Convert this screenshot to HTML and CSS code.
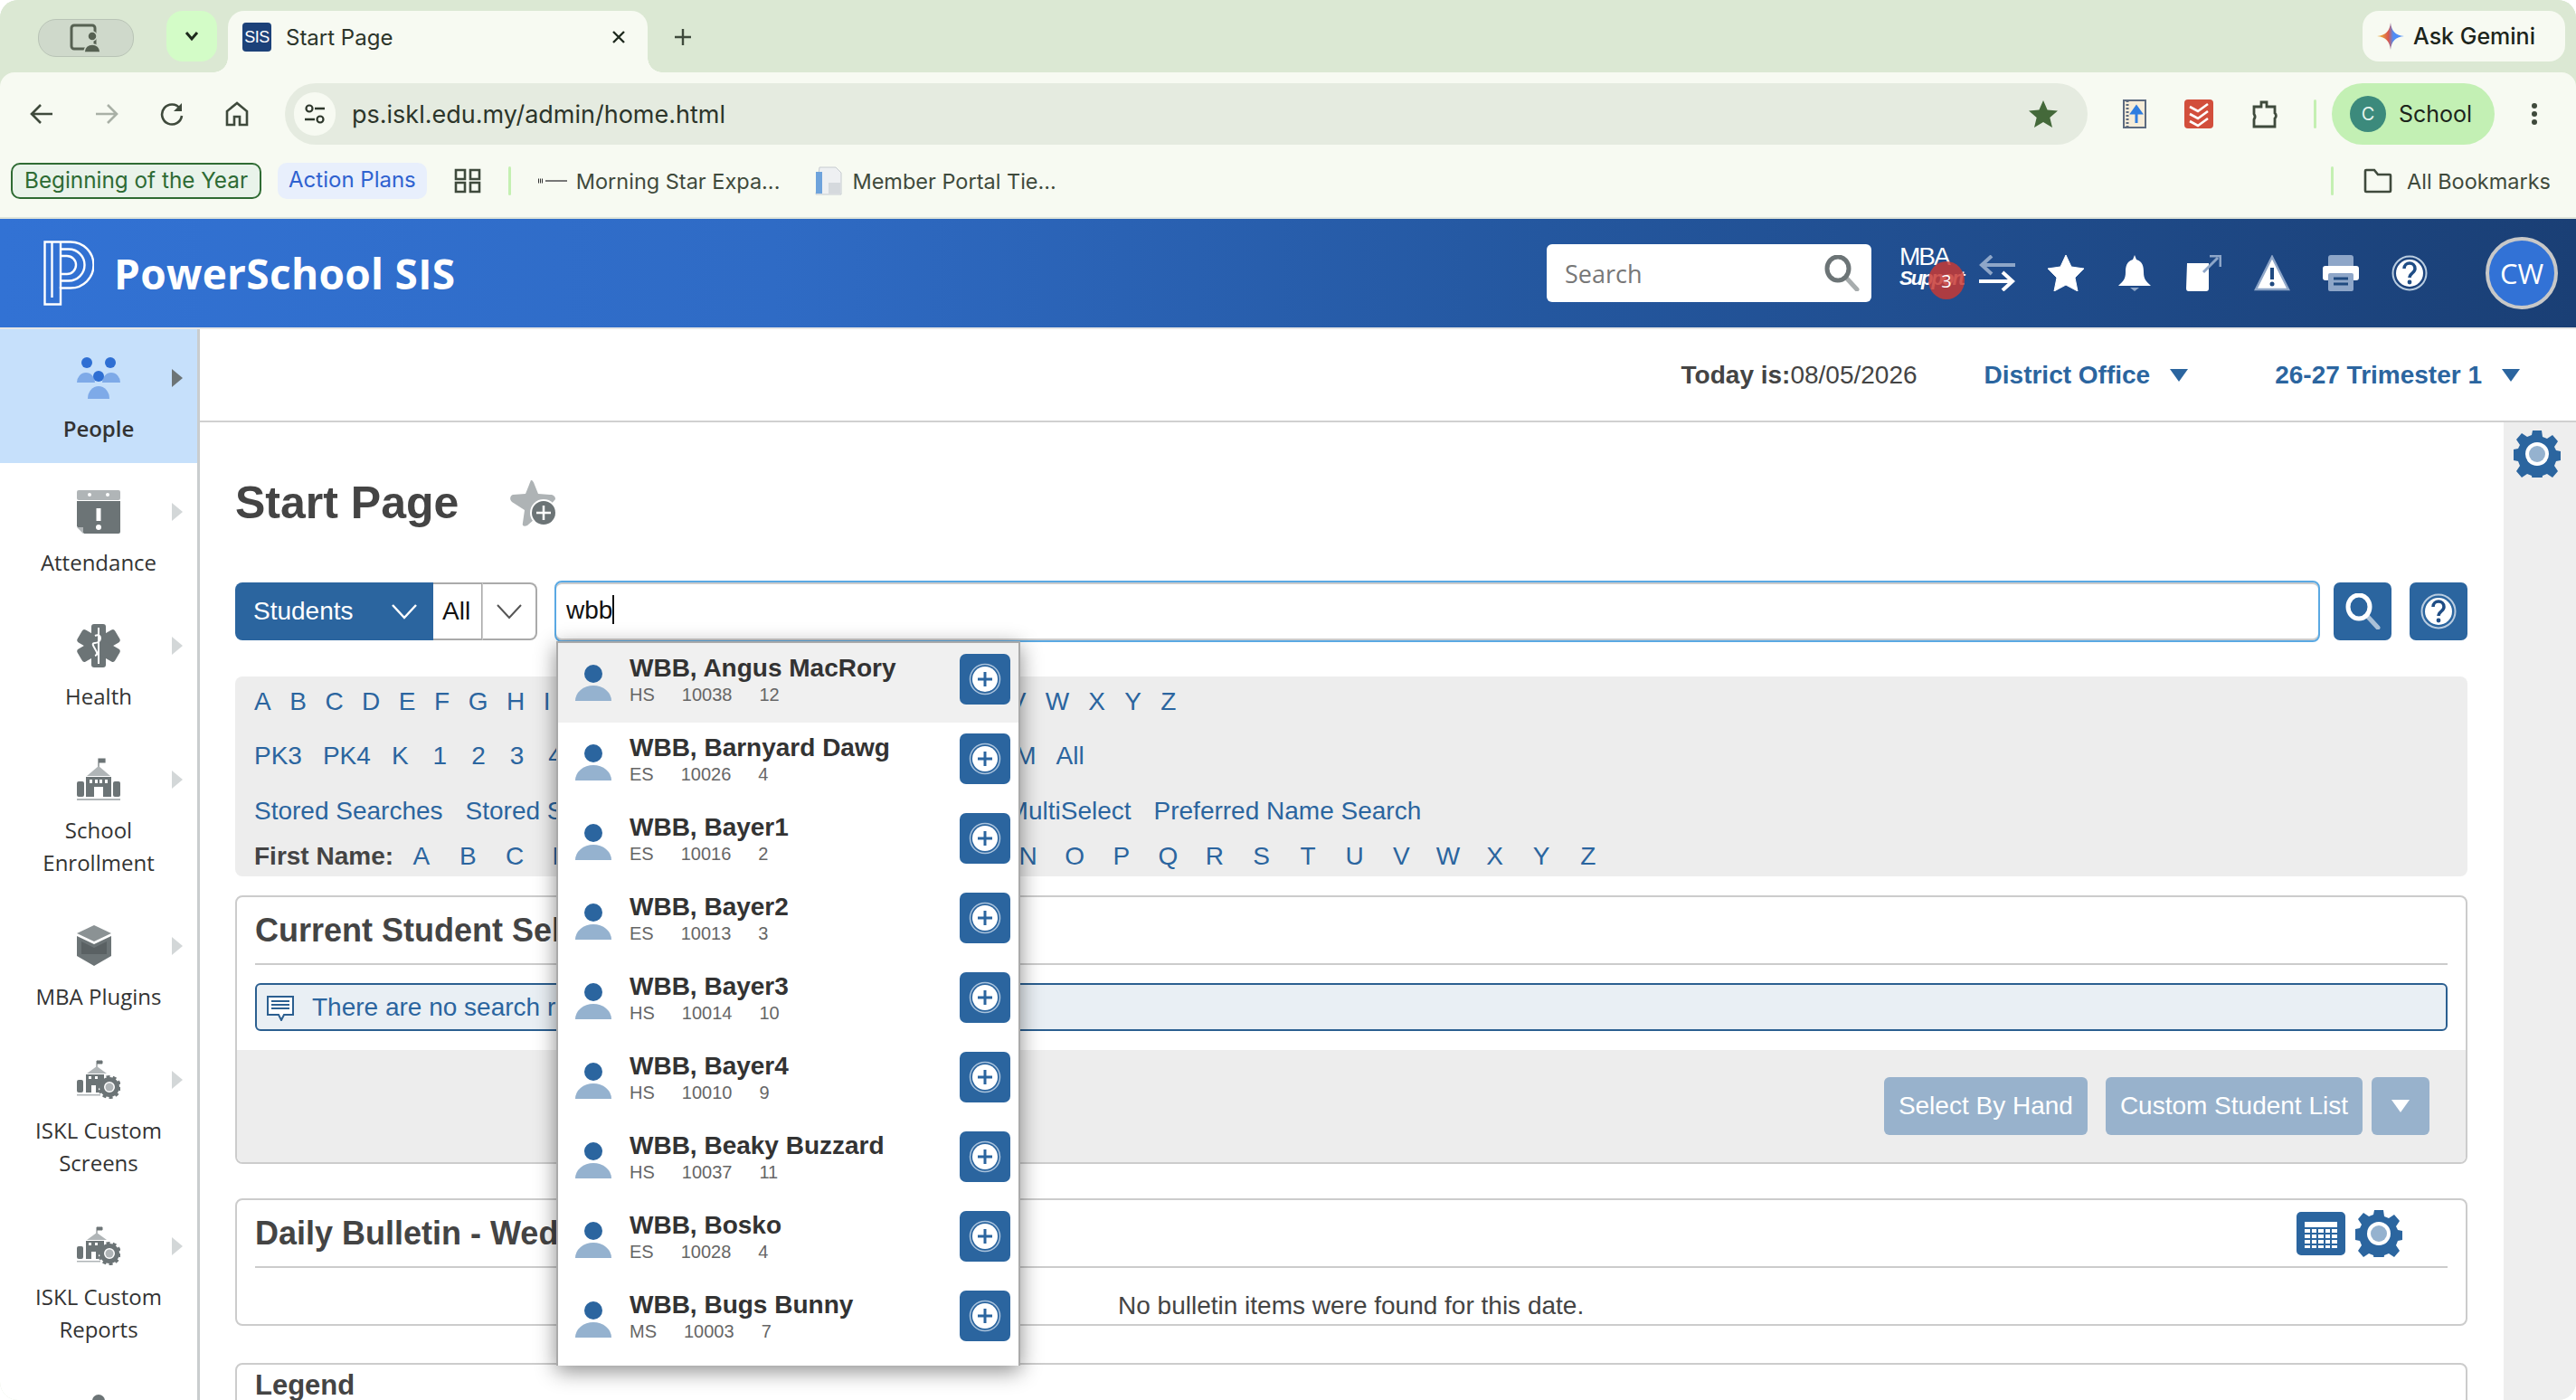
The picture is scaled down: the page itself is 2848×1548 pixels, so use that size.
FILE: index.html
```html
<!DOCTYPE html>
<html lang="en">
<head>
    <meta charset="UTF-8">
    <title>Start Page</title>
    <link rel="stylesheet" href="styles.css">
</head>
<body>
<svg class="defs" width="0" height="0">
    <defs>
        <symbol id="i-person" viewBox="0 0 40 40">
            <circle cx="20" cy="10" r="10" fill="#2b659f"/>
            <path d="M0 40a20 17 0 0 1 40 0z" fill="#95b2cf"/>
        </symbol>
        <symbol id="i-plus" viewBox="0 0 36 36">
            <circle cx="18" cy="18" r="16.5" fill="none" stroke="#aac3dc" stroke-width="1.5"/>
            <circle cx="18" cy="18" r="14" fill="#fff"/>
            <path d="M18 10v16M10 18h16" stroke="#2b659f" stroke-width="3"/>
        </symbol>
        <symbol id="i-help" viewBox="0 0 40 40">
            <circle cx="20" cy="20" r="18.5" fill="none" stroke="#b9cce0" stroke-width="2"/>
            <circle cx="20" cy="20" r="15" fill="#fff"/>
            <path d="M14 15c0-8 12-8 12 0 0 5-6 5-6 10" fill="none" stroke="#1f4d85" stroke-width="3.5"/>
            <circle cx="20" cy="30" r="2.4" fill="#1f4d85"/>
        </symbol>
        <symbol id="i-mag" viewBox="0 0 40 40">
            <path d="M25 25l12 13" stroke="currentColor" stroke-opacity=".6" stroke-width="5" stroke-linecap="round"/>
            <ellipse cx="16" cy="15" rx="12" ry="13" fill="none" stroke="currentColor" stroke-width="5"/>
        </symbol>
        <symbol id="i-gear" viewBox="0 0 52 52">
            <path d="M21 0h10l1 7 5 2 6-4 6 7-4 6 2 4 5 1v10l-5 1-2 5 4 6-6 7-6-4-5 2-1 7H21l-1-7-5-2-6 4-6-7 4-6-2-5-5-1V21l5-1 2-4-4-6 6-7 6 4 5-2z" fill="#2b659f"/>
            <circle cx="26" cy="26" r="13" fill="#fff"/>
            <circle cx="26" cy="26" r="9" fill="#95b2cf"/>
        </symbol>
        <symbol id="i-school" viewBox="0 0 48 48">
            <path d="M24 11V1h7v4h-7" fill="#6c7476" stroke="#6c7476" stroke-width="1.2"/>
            <path d="M24 9l13 11H11z" fill="#b0b5b7"/>
            <path d="M10 21h28v22h-9V32h-10v11h-9z" fill="#6c7476"/>
            <path d="M14 24h3v4h-3zM20 24h3v4h-3zM25 24h3v4h-3zM31 24h3v4h-3z" fill="#fff"/>
            <path d="M23 32h2v11h-2z" fill="#fff"/>
            <rect x="0" y="26" width="8" height="17" rx="2" fill="#6c7476"/>
            <rect x="40" y="26" width="8" height="17" rx="2" fill="#6c7476"/>
            <rect x="0" y="45" width="48" height="2" fill="#b0b5b7"/>
        </symbol>
        <symbol id="i-school-gear" viewBox="0 0 48 44">
            <path d="M22 8V1h6v3h-6" fill="#6c7476" stroke="#6c7476" stroke-width="1"/>
            <path d="M22 7l11 8H11z" fill="#b0b5b7"/>
            <path d="M10 16h20v8l-6 8v4h-3v-8h-5v8h-6z" fill="#6c7476"/>
            <path d="M13 18h3v3h-3zM20 18h3v3h-3z" fill="#fff"/>
            <rect x="0" y="22" width="7" height="14" rx="2" fill="#6c7476"/>
            <rect x="0" y="38" width="26" height="1.5" fill="#b0b5b7"/>
            <circle cx="36" cy="30" r="8.5" fill="none" stroke="#6c7476" stroke-width="5"/>
            <circle cx="36" cy="30" r="11.5" fill="none" stroke="#6c7476" stroke-width="3" stroke-dasharray="4 3.2"/>
            <circle cx="36" cy="30" r="4.5" fill="#b0b5b7"/>
        </symbol>
    </defs>
</svg>

<div class="window">
    <div class="tabstrip">
        <div class="profile-pill">
            <svg width="40" height="32" viewBox="0 0 40 32"><rect x="4" y="2" width="26" height="26" rx="3" fill="none" stroke="#566152" stroke-width="3"/><circle cx="27" cy="14" r="5" fill="#566152" stroke="#cfd9cb" stroke-width="1.5"/><path d="M18 32c0-12 18-12 18 0z" fill="#566152" stroke="#cfd9cb" stroke-width="1.5"/></svg>
        </div>
        <div class="tab-group">
            <svg width="16" height="12" viewBox="0 0 16 12"><path d="M2 2l6 7 6-7" fill="none" stroke="#1d2a1c" stroke-width="3"/></svg>
        </div>
        <div class="tab">
            <span class="favicon">SIS</span>
            <span class="tab-title">Start Page</span>
            <svg class="tab-close" width="16" height="16" viewBox="0 0 16 16"><path d="M2 2l12 12M14 2L2 14" stroke="#1f2a1e" stroke-width="2.4"/></svg>
        </div>
        <svg class="new-tab" width="20" height="20" viewBox="0 0 20 20"><path d="M10 1v18M1 10h18" stroke="#3f4a3c" stroke-width="2.4"/></svg>
        <div class="gemini">
            <svg width="30" height="30" viewBox="0 0 30 30">
                <defs><linearGradient id="gem" x1="0" x2="1" y1="0" y2="0"><stop offset=".15" stop-color="#e9a33a"/><stop offset=".42" stop-color="#d9574c"/><stop offset=".6" stop-color="#4f8df5"/></linearGradient></defs>
                <path d="M15 0c1 9 5 14 15 15-10 1-14 6-15 15-1-9-5-14-15-15 10-1 14-6 15-15z" fill="url(#gem)"/>
            </svg>
            <span>Ask Gemini</span>
        </div>
    </div>

    <div class="toolbar">
        <div class="nav-icons">
            <svg width="28" height="28" viewBox="0 0 28 28"><path d="M26 14H4M13 4L3 14l10 10" fill="none" stroke="#3f4a3c" stroke-width="2.6"/></svg>
            <svg width="28" height="28" viewBox="0 0 28 28"><path d="M2 14h22M15 4l10 10-10 10" fill="none" stroke="#a9b0a6" stroke-width="2.6"/></svg>
            <svg width="28" height="28" viewBox="0 0 28 28"><path d="M23 8a11 11 0 1 0 2 8" fill="none" stroke="#3f4a3c" stroke-width="2.6"/><path d="M25 2v9h-9z" fill="#3f4a3c"/></svg>
            <svg width="28" height="28" viewBox="0 0 28 28"><path d="M14 2L3 11v15h8v-9h6v9h8V11z" fill="none" stroke="#3f4a3c" stroke-width="2.6"/></svg>
        </div>
        <div class="omnibox">
            <span class="site-info">
                <svg width="26" height="26" viewBox="0 0 26 26"><circle cx="7" cy="7" r="3.5" fill="none" stroke="#2e382c" stroke-width="2.2"/><path d="M13 7h11M2 19h11" stroke="#2e382c" stroke-width="2.4"/><circle cx="19" cy="19" r="3.5" fill="none" stroke="#2e382c" stroke-width="2.2"/></svg>
            </span>
            <span class="url">ps.iskl.edu.my/admin/home.html</span>
            <svg class="url-star" width="32" height="30" viewBox="0 0 32 30"><path d="M16 0l4.6 10.5 11.4 1-8.700 7.500 2.700 11L16 24l-10 6 2.700-11L0 11.500l11.400-1z" fill="#44693a"/></svg>
        </div>
        <div class="ext-icons">
            <svg width="26" height="32" viewBox="0 0 26 32"><rect x="1" y="1" width="24" height="30" fill="#f6ecd8" stroke="#5d6b80" stroke-width="2"/><path d="M5 1v30" stroke="#5d6b80" stroke-width="3" stroke-dasharray="2 2"/><path d="M15 26V12M10 15l5-7 5 7z" stroke="#2f7de0" stroke-width="3" fill="#2f7de0"/></svg>
            <svg width="32" height="32" viewBox="0 0 32 32"><rect width="32" height="32" rx="4" fill="#d24e3c"/><path d="M6 8l9 5 11-8M6 16l9 5 11-8M6 24l9 5 11-8" fill="none" stroke="#fff" stroke-width="2.6"/></svg>
            <svg width="32" height="32" viewBox="0 0 32 32"><path d="M3 8h8V3h6v5h9v7a4 4 0 0 1 0 6v9H3v-8a5 5 0 0 0 0-6z" fill="none" stroke="#3f4a3c" stroke-width="2.8"/></svg>
        </div>
        <span class="chrome-sep"></span>
        <div class="school-pill">
            <span class="school-avatar">C</span>
            <span>School</span>
        </div>
        <svg class="kebab" width="8" height="26" viewBox="0 0 8 26"><circle cx="4" cy="4" r="3" fill="#3f4a3c"/><circle cx="4" cy="13" r="3" fill="#3f4a3c"/><circle cx="4" cy="22" r="3" fill="#3f4a3c"/></svg>
    </div>

    <div class="bookmarks">
        <span class="bm-green">Beginning of the Year</span>
        <span class="bm-blue">Action Plans</span>
        <svg class="bm-grid" width="30" height="28" viewBox="0 0 30 28"><path d="M2 2h10v10H2zM18 2h10v10H18zM2 16h10v10H2zM18 16h10v10H18z" fill="none" stroke="#3f4a3c" stroke-width="2.6"/></svg>
        <span class="chrome-sep"></span>
        <span class="bm-item">
            <svg width="32" height="8" viewBox="0 0 32 8"><path d="M0 4h6" stroke="#333" stroke-width="5" stroke-dasharray="1 1"/><path d="M8 4h24" stroke="#777" stroke-width="2"/></svg>
            Morning Star Expa...
        </span>
        <span class="bm-item bm-next">
            <svg width="32" height="32" viewBox="0 0 32 32"><path d="M6 1h18l6 6v24H2z" fill="#eef0f2" stroke="#c6cbd0"/><rect x="2" y="6" width="7" height="24" fill="#6ea3dc"/><rect x="16" y="18" width="13" height="12" fill="#d5d9dd"/></svg>
            Member Portal Tie...
        </span>
        <span class="chrome-sep bm-right"></span>
        <span class="bm-item">
            <svg width="32" height="28" viewBox="0 0 32 28"><path d="M2 25V3a1 1 0 0 1 1-1h9l4 5h13a1 1 0 0 1 1 1v17a1 1 0 0 1-1 1H3a1 1 0 0 1-1-1z" fill="none" stroke="#3f4a3c" stroke-width="2.6"/></svg>
            All Bookmarks
        </span>
    </div>

    <header class="ps-header">
        <svg class="ps-logo" width="56" height="72" viewBox="0 0 56 72">
            <g fill="none" stroke="#fff" stroke-width="2.4">
                <path d="M1.500 1.500H30a25 25 0 0 1 0 51H19v18H1.500z"/>
                <path d="M9.500 1.500V63"/>
                <path d="M19 1.500V53"/>
                <path d="M19 9.500h9a17.500 17.500 0 0 1 0 35h-9"/>
                <path d="M19 17h7a10 10 0 0 1 0 20h-7"/>
            </g>
        </svg>
        <span class="ps-name">PowerSchool SIS</span>
        <div class="header-search">
            <span>Search</span>
            <svg class="header-mag" width="40" height="40"><use href="#i-mag"/></svg>
        </div>
        <div class="mba-link">
            <span class="mba-top">MBA</span>
            <span class="mba-bottom">Support</span>
            <span class="mba-badge">3</span>
        </div>
        <div class="header-icons">
            <svg width="40" height="40" viewBox="0 0 40 40"><path d="M40 11H4M14 1L3 11l11 10" fill="none" stroke="#8ea6c8" stroke-width="4"/><path d="M0 29h36M26 19l11 10-11 10" fill="none" stroke="#fff" stroke-width="4"/></svg>
            <svg width="40" height="40" viewBox="0 0 40 40"><path d="M20 0l6 13 14 2-10 10 3 15-13-7-13 7 3-15L0 15l14-2z" fill="#fff" stroke="#fff" stroke-linejoin="round" stroke-width="1"/></svg>
            <svg width="40" height="40" viewBox="0 0 40 40"><path d="M20 0l2 5c7 2 8 8 8 14 0 8 3 10 8 15H2c5-5 8-7 8-15 0-6 1-12 8-14z" fill="#fff"/><path d="M15 36h10l-5 4z" fill="#8ea6c8"/></svg>
            <svg width="40" height="40" viewBox="0 0 40 40"><path d="M2 9h24v28a3 3 0 0 1-3 3H3a3 3 0 0 1-2-3z" fill="#fff"/><path d="M20 19L36 3" stroke="#8ea6c8" stroke-width="3"/><path d="M27 1h12v12" fill="none" stroke="#8ea6c8" stroke-width="3"/></svg>
            <svg width="40" height="40" viewBox="0 0 40 40"><path d="M20 2L38 38H2z" fill="#fff" stroke="#8ea6c8" stroke-width="2.500"/><path d="M20 14v13" stroke="#1f4a80" stroke-width="4"/><circle cx="20" cy="32" r="2.500" fill="#1f4a80"/></svg>
            <svg width="40" height="40" viewBox="0 0 40 40"><rect x="6" y="0" width="28" height="14" rx="3" fill="#8ea6c8"/><rect x="0" y="12" width="40" height="16" rx="3" fill="#fff"/><rect x="6" y="20" width="28" height="20" rx="2" fill="#8ea6c8"/><path d="M12 26h16M12 32h16" stroke="#1f4a80" stroke-width="3"/></svg>
            <svg width="40" height="40"><use href="#i-help"/></svg>
        </div>
        <span class="avatar">CW</span>
    </header>

    <div class="ps-body">
        <nav class="sidebar">
            <a class="nav-item active">
                <svg class="nav-icon" width="48" height="46" viewBox="0 0 48 46">
                    <path d="M0 28a10 11 0 0 1 20 0zM28 28a10 11 0 0 1 20 0z" fill="#7eaae8"/>
                    <path d="M12 46a12 14 0 0 1 24 0z" fill="#7eaae8"/>
                    <circle cx="11" cy="6" r="6" fill="#2f6fd3"/><circle cx="37" cy="6" r="6" fill="#2f6fd3"/><circle cx="24" cy="21" r="6" fill="#2f6fd3"/>
                </svg>
                <span class="nav-arrow"></span>
                <span class="nav-label">People</span>
            </a>
            <a class="nav-item">
                <svg class="nav-icon" width="48" height="48" viewBox="0 0 48 48">
                    <rect width="48" height="11" rx="2" fill="#b0b5b7"/>
                    <circle cx="14" cy="5" r="2" fill="#fff"/><circle cx="34" cy="5" r="2" fill="#fff"/>
                    <path d="M0 12h48v34a2 2 0 0 1-2 2H8l-8-8z" fill="#6c7476"/>
                    <path d="M0 41h7v7z" fill="#b0b5b7"/>
                    <path d="M24 20v14" stroke="#fff" stroke-width="5"/><circle cx="24" cy="41" r="3" fill="#fff"/>
                </svg>
                <span class="nav-arrow"></span>
                <span class="nav-label">Attendance</span>
            </a>
            <a class="nav-item">
                <svg class="nav-icon" width="48" height="48" viewBox="0 0 48 48">
                    <g fill="#6c7476"><rect x="16" y="0" width="16" height="48" rx="3"/><rect x="16" y="0" width="16" height="48" rx="3" transform="rotate(60 24 24)"/><rect x="16" y="0" width="16" height="48" rx="3" transform="rotate(120 24 24)"/></g>
                    <path d="M24 4v40M20 13c8-4 8 8 0 8s8 12 0 14" fill="none" stroke="#fff" stroke-width="2"/>
                </svg>
                <span class="nav-arrow"></span>
                <span class="nav-label">Health</span>
            </a>
            <a class="nav-item">
                <svg class="nav-icon" width="48" height="48"><use href="#i-school"/></svg>
                <span class="nav-arrow"></span>
                <span class="nav-label">School<br>Enrollment</span>
            </a>
            <a class="nav-item">
                <svg class="nav-icon cube" width="38" height="46" viewBox="0 0 38 46">
                    <path d="M19 0l19 9-19 9L0 9z" fill="#8b9294"/>
                    <path d="M0 12l19 9 19-9v22l-19 11L0 34z" fill="#6c7476"/>
                    <path d="M5 18l14 7 14-7v14H5z" fill="#5a6163"/>
                </svg>
                <span class="nav-arrow"></span>
                <span class="nav-label">MBA Plugins</span>
            </a>
            <a class="nav-item">
                <svg class="nav-icon" width="48" height="44"><use href="#i-school-gear"/></svg>
                <span class="nav-arrow"></span>
                <span class="nav-label">ISKL Custom<br>Screens</span>
            </a>
            <a class="nav-item">
                <svg class="nav-icon" width="48" height="44"><use href="#i-school-gear"/></svg>
                <span class="nav-arrow"></span>
                <span class="nav-label">ISKL Custom<br>Reports</span>
            </a>
            <a class="nav-item">
                <svg class="nav-icon" width="48" height="46" viewBox="0 0 48 46"><circle cx="24" cy="10" r="7" fill="#6c7476"/></svg>
            </a>
        </nav>

        <main class="main">
            <div class="subbar">
                <span class="today"><b>Today is:</b>08/05/2026</span>
                <span class="picker picker-school">District Office<i class="tri"></i></span>
                <span class="picker">26-27 Trimester 1<i class="tri"></i></span>
            </div>
            <div class="main-row">
                <div class="content">
                    <div class="title-row">
                        <h1>Start Page</h1>
                        <svg width="56" height="54" viewBox="0 0 56 54">
                            <path d="M26 2c2 0 3 2 4 5l4 10 13 1c4 0 6 2 6 5l-7 8-24 21c-4 2-6 0-5-3l2-14-14-9c-3-3-2-7 1-8l14-1 4-10c1-3 2-5 2-5z" fill="#aeb3b5"/>
                            <circle cx="40" cy="38" r="15" fill="#fff"/>
                            <circle cx="40" cy="38" r="13" fill="#6c7476"/>
                            <path d="M40 30v16M32 38h16" stroke="#fff" stroke-width="2.500"/>
                        </svg>
                    </div>

                    <div class="search-row">
                        <div class="type-select">
                            <span class="type-students">Students
                                <svg width="28" height="18" viewBox="0 0 28 18"><path d="M1 2l13 14L27 2" fill="none" stroke="#fff" stroke-width="2.500"/></svg>
                            </span>
                            <span class="type-all">All</span>
                            <span class="type-caret">
                                <svg width="28" height="18" viewBox="0 0 28 18"><path d="M1 2l13 14L27 2" fill="none" stroke="#555" stroke-width="2"/></svg>
                            </span>
                        </div>
                        <div class="search-wrap">
                            <div class="search-input">wbb<span class="caret"></span></div>
                            <ul class="results">
                                <li class="hover">
                                    <svg class="res-icon" width="40" height="40"><use href="#i-person"/></svg>
                                    <div class="res-text"><b>WBB, Angus MacRory</b><span><i>HS</i><i>10038</i><i>12</i></span></div>
                                    <span class="res-add"><svg width="36" height="36"><use href="#i-plus"/></svg></span>
                                </li>
                                <li>
                                    <svg class="res-icon" width="40" height="40"><use href="#i-person"/></svg>
                                    <div class="res-text"><b>WBB, Barnyard Dawg</b><span><i>ES</i><i>10026</i><i>4</i></span></div>
                                    <span class="res-add"><svg width="36" height="36"><use href="#i-plus"/></svg></span>
                                </li>
                                <li>
                                    <svg class="res-icon" width="40" height="40"><use href="#i-person"/></svg>
                                    <div class="res-text"><b>WBB, Bayer1</b><span><i>ES</i><i>10016</i><i>2</i></span></div>
                                    <span class="res-add"><svg width="36" height="36"><use href="#i-plus"/></svg></span>
                                </li>
                                <li>
                                    <svg class="res-icon" width="40" height="40"><use href="#i-person"/></svg>
                                    <div class="res-text"><b>WBB, Bayer2</b><span><i>ES</i><i>10013</i><i>3</i></span></div>
                                    <span class="res-add"><svg width="36" height="36"><use href="#i-plus"/></svg></span>
                                </li>
                                <li>
                                    <svg class="res-icon" width="40" height="40"><use href="#i-person"/></svg>
                                    <div class="res-text"><b>WBB, Bayer3</b><span><i>HS</i><i>10014</i><i>10</i></span></div>
                                    <span class="res-add"><svg width="36" height="36"><use href="#i-plus"/></svg></span>
                                </li>
                                <li>
                                    <svg class="res-icon" width="40" height="40"><use href="#i-person"/></svg>
                                    <div class="res-text"><b>WBB, Bayer4</b><span><i>HS</i><i>10010</i><i>9</i></span></div>
                                    <span class="res-add"><svg width="36" height="36"><use href="#i-plus"/></svg></span>
                                </li>
                                <li>
                                    <svg class="res-icon" width="40" height="40"><use href="#i-person"/></svg>
                                    <div class="res-text"><b>WBB, Beaky Buzzard</b><span><i>HS</i><i>10037</i><i>11</i></span></div>
                                    <span class="res-add"><svg width="36" height="36"><use href="#i-plus"/></svg></span>
                                </li>
                                <li>
                                    <svg class="res-icon" width="40" height="40"><use href="#i-person"/></svg>
                                    <div class="res-text"><b>WBB, Bosko</b><span><i>ES</i><i>10028</i><i>4</i></span></div>
                                    <span class="res-add"><svg width="36" height="36"><use href="#i-plus"/></svg></span>
                                </li>
                                <li>
                                    <svg class="res-icon" width="40" height="40"><use href="#i-person"/></svg>
                                    <div class="res-text"><b>WBB, Bugs Bunny</b><span><i>MS</i><i>10003</i><i>7</i></span></div>
                                    <span class="res-add"><svg width="36" height="36"><use href="#i-plus"/></svg></span>
                                </li>
                            </ul>
                        </div>
                        <span class="square-btn"><svg class="btn-mag" width="40" height="40"><use href="#i-mag"/></svg></span>
                        <span class="square-btn"><svg width="40" height="40"><use href="#i-help"/></svg></span>
                    </div>

                    <div class="letters">
                        <div class="letter-row alpha">
                            <a>A</a><a>B</a><a>C</a><a>D</a><a>E</a><a>F</a><a>G</a><a>H</a><a>I</a><a>J</a><a>K</a><a>L</a><a>M</a><a>N</a><a>O</a><a>P</a><a>Q</a><a>R</a><a>S</a><a>T</a><a>U</a><a>V</a><a>W</a><a>X</a><a>Y</a><a>Z</a>
                        </div>
                        <div class="letter-row grades">
                            <a>PK3</a><a>PK4</a><a>K</a><a>1</a><a>2</a><a>3</a><a>4</a><a>5</a><a>6</a><a>7</a><a>8</a><a>9</a><a>10</a><a>11</a><a>12</a><a class="gender">F</a><a class="male">M</a><a>All</a>
                        </div>
                        <div class="letter-row links">
                            <a>Stored Searches</a><a>Stored Selections</a><a>View Field List</a><a>Advanced</a><a>MultiSelect</a><a>Preferred Name Search</a>
                        </div>
                        <div class="letter-row first-name">
                            <b>First Name:</b><a>A</a><a>B</a><a>C</a><a>D</a><a>E</a><a>F</a><a>G</a><a>H</a><a>I</a><a>J</a><a>K</a><a>L</a><a>M</a><a>N</a><a>O</a><a>P</a><a>Q</a><a>R</a><a>S</a><a>T</a><a>U</a><a>V</a><a>W</a><a>X</a><a>Y</a><a>Z</a>
                        </div>
                    </div>

                    <section class="card selection">
                        <div class="card-head"><h2>Current Student Selection</h2></div>
                        <div class="info-box">
                            <svg width="30" height="30" viewBox="0 0 30 30"><path d="M1 3h28v20H19l-3 6-3-6H1z" fill="#fff" stroke="#2b5f90" stroke-width="2"/><path d="M5 8h20M5 12h20M5 16h20" stroke="#2b5f90" stroke-width="1.800"/></svg>
                            There are no search results
                        </div>
                        <div class="card-foot">
                            <span class="muted-btn">Select By Hand</span>
                            <span class="muted-btn">Custom Student List</span>
                            <span class="muted-btn caret-btn"><i class="tri tri-white"></i></span>
                        </div>
                    </section>

                    <section class="card bulletin">
                        <div class="card-head">
                            <h2>Daily Bulletin - Wednesday, August 5, 2026</h2>
                            <svg class="cal" width="54" height="48" viewBox="0 0 54 48"><rect width="54" height="48" rx="5" fill="#2b659f"/><rect x="9" y="11" width="36" height="29" fill="#fff"/><path d="M9 18h36M9 24h36M9 30h36M9 36h36M16 18v22M23 18v22M31 18v22M38 18v22" stroke="#2b659f" stroke-width="2"/></svg>
                            <svg width="52" height="52"><use href="#i-gear"/></svg>
                        </div>
                        <p class="no-items">No bulletin items were found for this date.</p>
                    </section>

                    <section class="card legend">
                        <h3>Legend</h3>
                    </section>
                </div>
                <aside class="rail">
                    <svg width="52" height="52"><use href="#i-gear"/></svg>
                </aside>
            </div>
        </main>
    </div>
</div>
</body>
</html>
```

FILE: styles.css
```css
html, body {
    margin: 0;
    padding: 0;
    height: 100%;
    overflow: hidden;
    background: #fff;
}
.defs {
    position: absolute;
}
.window {
    height: 1548px;
    overflow: hidden;
    border-radius: 20px;
    background: #dbe8d3;
    font-family: "Liberation Sans", Arial, sans-serif;
    font-size: 28px;
    color: #444;
}

/* browser chrome */
.tabstrip {
    height: 80px;
    box-sizing: border-box;
    padding-top: 12px;
    background: #dbe8d3;
    display: flex;
    font-family: Inter, sans-serif;
}
.profile-pill {
    width: 104px;
    height: 40px;
    margin: 9px 0 0 42px;
    border: 1px solid #b9c4b6;
    border-radius: 20px;
    background: #cfd9cb;
    display: flex;
    align-items: center;
    justify-content: center;
}
.tab-group {
    width: 56px;
    height: 56px;
    margin-left: 36px;
    border-radius: 18px;
    background: #d3fcc7;
    display: flex;
    align-items: center;
    justify-content: center;
}
.tab {
    width: 464px;
    height: 68px;
    margin-left: 12px;
    box-sizing: border-box;
    padding: 0 24px 10px 16px;
    border-radius: 18px 18px 0 0;
    background: #f7faf2;
    display: flex;
    align-items: center;
    font-size: 24px;
    color: #2c352a;
    position: relative;
}
.tab::before, .tab::after {
    content: "";
    position: absolute;
    bottom: 0;
    width: 16px;
    height: 16px;
}
.tab::before {
    left: -16px;
    background: radial-gradient(circle at 0 0, #dbe8d3 15.5px, #f7faf2 16px);
}
.tab::after {
    right: -16px;
    background: radial-gradient(circle at 100% 0, #dbe8d3 15.5px, #f7faf2 16px);
}
.favicon {
    width: 32px;
    height: 32px;
    border-radius: 4px;
    background: #1c4179;
    color: #fff;
    font: 18px "Liberation Sans", sans-serif;
    letter-spacing: -.5px;
    display: flex;
    align-items: center;
    justify-content: center;
}
.tab-title {
    margin-left: 16px;
    flex: 1;
}
.new-tab {
    margin: 19px 0 0 29px;
}
.gemini {
    margin-left: auto;
    margin-right: 12px;
    width: 224px;
    height: 56px;
    box-sizing: border-box;
    padding-left: 16px;
    border-radius: 18px;
    background: #f7faf2;
    display: flex;
    align-items: center;
    gap: 10px;
    font-size: 25px;
    font-weight: 500;
    color: #1c241b;
}
.toolbar {
    height: 80px;
    box-sizing: border-box;
    padding-top: 12px;
    border-radius: 16px 16px 0 0;
    background: #f7faf2;
    display: flex;
    align-items: flex-start;
}
.nav-icons {
    height: 68px;
    width: 315px;
    box-sizing: border-box;
    padding-left: 32px;
    display: flex;
    align-items: center;
    gap: 44px;
}
.omnibox {
    width: 1993px;
    height: 68px;
    border-radius: 34px;
    background: #e5ebe0;
    display: flex;
    align-items: center;
    font-family: Inter, sans-serif;
    font-size: 27px;
    color: #2c352a;
}
.site-info {
    width: 46px;
    height: 48px;
    margin-left: 10px;
    border-radius: 24px;
    background: #f7faf2;
    display: flex;
    align-items: center;
    justify-content: center;
}
.url {
    margin-left: 18px;
    flex: 1;
}
.url-star {
    margin-right: 33px;
}
.ext-icons {
    height: 68px;
    margin-left: 39px;
    display: flex;
    align-items: center;
    gap: 42px;
}
.chrome-sep {
    width: 3px;
    height: 32px;
    border-radius: 2px;
    background: #c4f0b2;
}
.toolbar .chrome-sep {
    margin: 18px 0 0 37px;
}
.school-pill {
    width: 180px;
    height: 68px;
    margin-left: 17px;
    border-radius: 34px;
    background: #c3f0b4;
    display: flex;
    align-items: center;
    gap: 14px;
    box-sizing: border-box;
    padding-left: 20px;
    font-family: Inter, sans-serif;
    font-size: 25px;
    color: #1c241b;
}
.school-avatar {
    width: 40px;
    height: 40px;
    border-radius: 50%;
    background: #3c8a7c;
    color: #e6f5ee;
    font-size: 20px;
    display: flex;
    align-items: center;
    justify-content: center;
}
.kebab {
    margin: 21px 0 0 40px;
}
.bookmarks {
    height: 80px;
    box-sizing: border-box;
    padding: 0 0 0 12px;
    background: #f7faf2;
    display: flex;
    align-items: center;
    font-family: Inter, sans-serif;
    font-size: 23.5px;
    color: #3f4a3c;
}
.bm-green {
    height: 40px;
    box-sizing: border-box;
    padding: 0 13px;
    border: 2px solid #2f6b33;
    border-radius: 10px;
    background: #e9f3ea;
    color: #2e6b34;
    font-size: 24.3px;
    line-height: 34px;
}
.bm-blue {
    height: 40px;
    margin-left: 18px;
    padding: 0 12px;
    border-radius: 10px;
    background: #e8effc;
    color: #2f62d0;
    font-size: 24px;
    line-height: 38px;
}
.bm-grid {
    margin-left: 30px;
}
.bookmarks .chrome-sep {
    margin-left: 30px;
}
.bm-item {
    margin-left: 30px;
    display: flex;
    align-items: center;
    gap: 10px;
}
.bm-item.bm-next {
    margin-left: 38px;
}
.bookmarks .bm-right {
    margin-left: auto;
}
.bm-right + .bm-item {
    margin-left: 33px;
    margin-right: 28px;
    gap: 16px;
}

/* powerschool header */
.ps-header {
    height: 120px;
    padding-top: 0;
    border-top: 2px solid #dfe4da;
    border-bottom: 2px solid #e6e6e6;
    background: linear-gradient(90deg, #3272d4 0%, #2f6bc5 30%, #24579f 60%, #1a3f75 100%);
    display: flex;
    align-items: center;
}
.ps-logo {
    margin-left: 48px;
}
.ps-name {
    margin-left: 22px;
    font-family: "Open Sans", sans-serif;
    font-size: 46px;
    font-weight: 700;
    letter-spacing: .3px;
    color: #fff;
}
.header-search {
    width: 359px;
    height: 64px;
    margin-left: auto;
    box-sizing: border-box;
    padding: 0 13px 0 20px;
    border-radius: 6px;
    background: #fff;
    display: flex;
    align-items: center;
    justify-content: space-between;
    font-family: "Open Sans", sans-serif;
    font-size: 27px;
    color: #777;
}
.header-mag {
    color: #6c7476;
}
.mba-link {
    width: 72px;
    height: 62px;
    margin-left: 31px;
    position: relative;
    color: #fff;
    font-family: "Liberation Sans", sans-serif;
}
.mba-top {
    display: block;
    font-size: 28px;
    line-height: 26px;
    letter-spacing: -2px;
}
.mba-bottom {
    display: block;
    font-size: 22px;
    line-height: 22px;
    font-weight: 700;
    font-style: italic;
    letter-spacing: -2px;
}
.mba-badge {
    position: absolute;
    left: 32px;
    top: 18px;
    width: 40px;
    height: 42px;
    border-radius: 50%;
    background: rgba(199, 57, 53, .85);
    font-family: "Open Sans", sans-serif;
    font-size: 20px;
    display: flex;
    align-items: center;
    justify-content: center;
}
.header-icons {
    margin-left: 16px;
    display: flex;
    gap: 36px;
}
.avatar {
    width: 80px;
    height: 80px;
    margin: 0 20px 0 64px;
    box-sizing: border-box;
    border: 4px solid #c8c8c8;
    border-radius: 50%;
    background: #3272d6;
    color: #fff;
    font-family: "Open Sans", sans-serif;
    font-size: 31px;
    display: flex;
    align-items: center;
    justify-content: center;
}

/* left nav */
.ps-body {
    display: flex;
    background: #fff;
}
.sidebar {
    width: 218px;
    flex: none;
    border-right: 3px solid #c9cdce;
    font-family: "Open Sans", sans-serif;
    font-size: 24px;
    line-height: 36px;
    color: #333;
}
.nav-item {
    display: grid;
    justify-items: center;
    padding: 28px 0 20px;
    text-align: center;
}
.nav-item.active {
    background: #c6e0fb;
    font-weight: 600;
}
.nav-icon {
    grid-area: 1 / 1;
    height: 52px;
    align-self: center;
}
.nav-icon.cube {
    justify-self: center;
    margin-right: 10px;
}
.nav-arrow {
    grid-area: 1 / 1;
    justify-self: end;
    align-self: center;
    width: 0;
    height: 0;
    margin-right: 16px;
    border-left: 12px solid #d3d7d8;
    border-top: 10px solid transparent;
    border-bottom: 10px solid transparent;
}
.active .nav-arrow {
    border-left-color: #6c7476;
}
.nav-label {
    margin-top: 12px;
}

/* main area */
.main {
    flex: 1;
    min-width: 0;
}
.subbar {
    height: 101px;
    border-bottom: 2px solid #d0d0d0;
    display: flex;
    align-items: center;
    justify-content: flex-end;
    padding-right: 62px;
}
.today {
    margin-right: 74px;
}
.picker {
    color: #2b659f;
    font-weight: 700;
    display: flex;
    align-items: center;
}
.picker-school {
    margin-right: 96px;
}
.tri {
    width: 0;
    height: 0;
    margin-left: 22px;
    border-top: 14px solid #2b659f;
    border-left: 10px solid transparent;
    border-right: 10px solid transparent;
}
.main-row {
    display: flex;
}
.content {
    flex: 1;
    min-width: 0;
    padding: 60px 40px 0 39px;
}
.rail {
    width: 80px;
    height: 1081px;
    flex: none;
    background: #eee;
    box-sizing: border-box;
    padding: 9px 0 0 11px;
}
.title-row {
    display: flex;
    align-items: center;
    gap: 54px;
}
h1 {
    margin: 0;
    font-size: 50px;
    line-height: 58px;
    font-weight: 700;
    color: #444;
}

/* search row */
.search-row {
    margin-top: 57px;
    display: flex;
    align-items: center;
}
.type-select {
    height: 64px;
    display: flex;
    align-items: stretch;
}
.type-students {
    width: 219px;
    box-sizing: border-box;
    padding: 0 18px 0 20px;
    border-radius: 8px 0 0 8px;
    background: #2b659f;
    color: #fff;
    display: flex;
    align-items: center;
    justify-content: space-between;
}
.type-all {
    width: 54px;
    box-sizing: border-box;
    padding-left: 10px;
    border: 2px solid #aaa;
    border-width: 2px 1px 2px 0;
    color: #111;
    line-height: 60px;
}
.type-caret {
    width: 61px;
    box-sizing: border-box;
    border: 2px solid #aaa;
    border-left: 1px solid #ccc;
    border-radius: 0 8px 8px 0;
    display: flex;
    align-items: center;
    justify-content: center;
}
.search-wrap {
    flex: 1;
    margin: 0 15px 0 19px;
    position: relative;
}
.search-input {
    height: 68px;
    box-sizing: border-box;
    padding-left: 11px;
    border: 2px solid #5aa9e3;
    border-radius: 8px;
    box-shadow: inset 0 2px 0 #ccc, inset 0 -2px 0 #ccc;
    color: #111;
    line-height: 62px;
}
.caret {
    display: inline-block;
    width: 2px;
    height: 32px;
    background: #111;
    vertical-align: -6px;
}
.results {
    position: absolute;
    z-index: 10;
    top: 67px;
    left: 2px;
    width: 513px;
    margin: 0;
    padding: 0 0 7px;
    list-style: none;
    box-sizing: border-box;
    border: 2px solid #aaa;
    border-bottom: 0;
    background: #fff;
    box-shadow: 0 6px 22px rgba(0, 0, 0, .45);
}
.results li {
    height: 88px;
    box-sizing: border-box;
    padding: 0 9px 8px 19px;
    display: flex;
    align-items: center;
}
.results li.hover {
    background: #f0f0f0;
}
.res-icon {
    flex: none;
    margin-top: 8px;
}
.res-text {
    flex: 1;
    margin-left: 20px;
    display: flex;
    flex-direction: column;
}
.res-text b {
    font-size: 28px;
    line-height: 32px;
    color: #333;
}
.res-text span {
    margin-top: 1px;
    font-size: 20px;
    line-height: 24px;
    color: #666;
}
.res-text i {
    font-style: normal;
    margin-right: 30px;
}
.res-add {
    width: 56px;
    height: 56px;
    border-radius: 7px;
    background: #2b659f;
    display: flex;
    align-items: center;
    justify-content: center;
}
.square-btn {
    width: 64px;
    height: 64px;
    margin-right: 20px;
    border-radius: 7px;
    background: #2b659f;
    display: flex;
    align-items: center;
    justify-content: center;
}
.square-btn:last-child {
    margin-right: 0;
}
.btn-mag {
    color: #fff;
}

/* letter panel */
.letters {
    height: 221px;
    margin-top: 38px;
    box-sizing: border-box;
    padding-left: 21px;
    border-radius: 8px;
    background: #ededed;
    display: grid;
    grid-template-rows: 56px 64px 57px 44px;
    align-items: center;
}
.letter-row a {
    color: #2b659f;
}
.alpha a {
    margin-right: 20.5px;
}
.alpha a:nth-child(n+9) {
    margin-right: 21.3px;
}
.grades a {
    margin-right: 27px;
}
.grades a:nth-child(-n+2) {
    margin-right: 23px;
}
.grades .gender {
    margin-left: 44px;
}
.grades .male {
    margin-right: 22px;
}
.links a {
    margin-right: 25px;
}
.first-name b {
    margin-right: 5px;
    color: #444;
}
.first-name a {
    display: inline-block;
    width: 51.6px;
    text-align: center;
}

/* cards */
.card {
    margin-top: 21px;
    border: 2px solid #ccc;
    border-radius: 8px;
    overflow: hidden;
}
.card-head {
    height: 73px;
    margin: 0 20px;
    border-bottom: 2px solid #ccc;
    display: flex;
    align-items: center;
}
h2 {
    margin: 0;
    flex: 1;
    font-size: 36px;
    font-weight: 700;
    color: #444;
}
.info-box {
    height: 53px;
    margin: 20px 20px 21px;
    box-sizing: border-box;
    padding-left: 11px;
    border: 2px solid #2b5f90;
    border-radius: 6px;
    background: #e9eff4;
    color: #2b659f;
    display: flex;
    align-items: center;
    gap: 20px;
}
.card-foot {
    height: 124px;
    box-sizing: border-box;
    padding-right: 40px;
    background: #ededed;
    display: flex;
    align-items: center;
    justify-content: flex-end;
    gap: 20px;
}
.muted-btn {
    height: 64px;
    padding: 0 16px;
    border-radius: 6px;
    background: #98b2cc;
    color: #fff;
    line-height: 64px;
}
.caret-btn {
    width: 64px;
    box-sizing: border-box;
    margin-left: -10px;
    padding: 0;
    display: flex;
    align-items: center;
    justify-content: center;
}
.tri-white {
    margin: 0;
    border-top-color: #fff;
}
.bulletin {
    margin-top: 38px;
}
.bulletin .card-head {
    height: 75px;
    padding-right: 50px;
    gap: 11px;
    box-sizing: border-box;
}
.no-items {
    margin: 0;
    height: 62px;
    padding-left: 974px;
    line-height: 84px;
}
.legend {
    margin-top: 41px;
    padding: 0 20px;
}
h3 {
    margin: 0;
    font-size: 31px;
    line-height: 46px;
    color: #444;
}
```
